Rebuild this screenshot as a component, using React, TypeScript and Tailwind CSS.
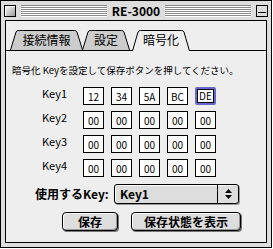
const jp = { fontFamily: '"Noto Sans CJK JP", "Noto Sans", sans-serif' };

const keys = [
  ["12", "34", "5A", "BC", "DE"],
  ["00", "00", "00", "00", "00"],
  ["00", "00", "00", "00", "00"],
  ["00", "00", "00", "00", "00"],
];

function Stripes() {
  return (
    <div className="flex flex-1 flex-col gap-px">
      {[0, 1, 2, 3, 4, 5].map((i) => (
        <div key={i} className="h-px bg-[#8a8a8a] shadow-[0_1px_0_#ffffff]" />
      ))}
    </div>
  );
}

function Tab({ label, width, active }: { label: string; width: number; active?: boolean }) {
  const w = width;
  const h = active ? 21 : 20;
  return (
    <div
      className={`relative flex items-center justify-center ${active ? "z-10 -mb-px h-[21px]" : "h-[20px]"}`}
      style={{ width: w }}
    >
      <svg className="absolute inset-0" width={w} height={h}>
        <path
          d={`M0.5 ${h} L6 2 Q6.8 0.5 8.5 0.5 L${w - 8.5} 0.5 Q${w - 6.8} 0.5 ${w - 6} 2 L${w - 0.5} ${h}`}
          fill={active ? "#eeeeee" : "#cccccc"}
          stroke="#000"
          strokeWidth="1"
        />
      </svg>
      <span className={`relative text-[12px] leading-none text-black ${active ? "-mt-px" : ""}`}>{label}</span>
    </div>
  );
}

export default function App() {
  return (
    <div className="h-[249px] w-[273px] bg-white" style={jp}>
      <div className="flex h-[248px] w-[272px] flex-col border border-black bg-[#dddddd]">
        {/* title bar */}
        <div className="flex h-[19px] items-center pl-[3px] pr-[3px]">
          <div className="h-[12px] w-[12px] border border-black bg-[linear-gradient(135deg,#ffffff,#999999)] shadow-[inset_1px_1px_0_#ffffff]" />
          <div className="ml-[5px] flex flex-1 items-center">
            <Stripes />
            <span className="px-[5px] text-[12px] font-bold leading-none text-black">RE-3000</span>
            <Stripes />
          </div>
          <div className="ml-[5px] flex h-[12px] w-[12px] flex-col justify-center border border-black bg-[#dddddd]">
            <div className="mx-px h-[4px] border-b border-black" />
          </div>
        </div>

        {/* content frame */}
        <div className="mx-[4px] mb-[4px] flex flex-1 flex-col border border-black bg-[#eeeeee]">
          {/* tabs */}
          <div className="mt-[9px] flex h-[21px] items-end border-b border-black pl-[4px]">
            <Tab label="接続情報" width={73} />
            <div className="-ml-px">
              <Tab label="設定" width={48} />
            </div>
            <div className="ml-[2px]">
              <Tab label="暗号化" width={58} active />
            </div>
          </div>

          <p className="mt-[13px] pl-[6px] text-[9.5px] leading-[12px] text-black">
            暗号化 Keyを設定して保存ボタンを押してください。
          </p>

          {/* key grid */}
          <div className="mt-[11px] flex flex-col gap-[6px] pl-[36px]">
            {keys.map((row, r) => (
              <div key={r} className="flex items-start">
                <span className="w-[41px] text-[11px] leading-[13px] text-black">Key{r + 1}</span>
                <div className="flex gap-[7px]">
                  {row.map((v, c) => {
                    const focused = r === 0 && c === 4;
                    return (
                      <div
                        key={c}
                        className={`flex h-[18px] w-[21px] items-end justify-center bg-white pb-px text-[10px] leading-[12px] text-black ${
                          focused
                            ? "rounded-[2px] border-2 border-[#6666cc] shadow-[inset_0_0_0_1px_#000]"
                            : "border border-black"
                        }`}
                      >
                        {v}
                      </div>
                    );
                  })}
                </div>
              </div>
            ))}
          </div>

          {/* select row */}
          <div className="mt-[7px] flex items-center pl-[29px]">
            <span className="w-[79px] text-[12px] font-bold leading-none text-black">使用するKey:</span>
            <div className="flex h-[20px] w-[125px] items-stretch rounded-[3px] border border-black bg-[#dddddd] shadow-[inset_1px_1px_0_#ffffff,1px_1px_0_#999999]">
              <span className="flex flex-1 items-center pl-[5px] text-[12px] font-bold leading-none text-black">
                Key1
              </span>
              <div className="flex w-[21px] flex-col items-center justify-center gap-[2px] border-l border-black">
                <svg width="7" height="4" viewBox="0 0 7 4">
                  <path d="M3.5 0 L7 4 L0 4 Z" fill="#000" />
                </svg>
                <svg width="7" height="4" viewBox="0 0 7 4">
                  <path d="M0 0 L7 0 L3.5 4 Z" fill="#000" />
                </svg>
              </div>
            </div>
          </div>

          {/* buttons */}
          <div className="mt-[8px] flex gap-[13px] pl-[56px]">
            <button className="flex h-[19px] w-[56px] items-center justify-center rounded-[4px] border border-black bg-[#dddddd] text-[12px] font-bold leading-none text-black shadow-[inset_1px_1px_0_#ffffff,inset_-1px_-1px_0_#999999,1px_1px_0_#777777]">
              保存
            </button>
            <button className="flex h-[19px] w-[110px] items-center justify-center rounded-[4px] border border-black bg-[#dddddd] text-[12px] font-bold leading-none text-black shadow-[inset_1px_1px_0_#ffffff,inset_-1px_-1px_0_#999999,1px_1px_0_#777777]">
              保存状態を表示
            </button>
          </div>
        </div>
      </div>
    </div>
  );
}
